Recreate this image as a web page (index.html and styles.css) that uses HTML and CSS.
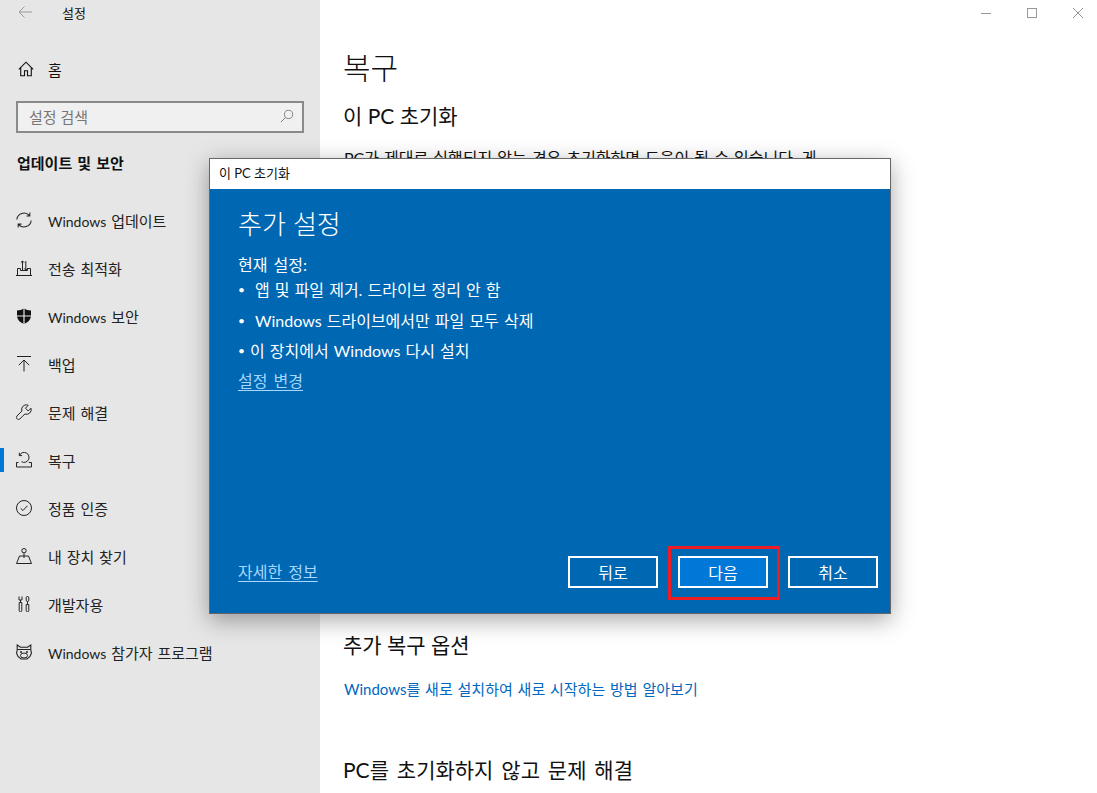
FILE: index.html
```html
<!DOCTYPE html>
<html lang="ko">
<head>
<meta charset="utf-8">
<title>설정</title>
<link rel="stylesheet" href="styles.css">
</head>
<body>
<div class="app">
  <aside class="sidebar">
    <div class="titlebar">
      <svg class="back" viewBox="0 0 16 16" width="16" height="16"><path d="M15 8H2M7.500 2.500 2 8l5.500 5.500" fill="none" stroke="#999" stroke-width="1"/></svg>
      <span class="apptitle">설정</span>
    </div>
    <a class="home">
      <svg class="icon" viewBox="0 0 16 16" width="16" height="16"><path d="M.8 8.300 8 1.200l7.200 7.100M2.700 6.500v8.300h3.800v-5h3v5h3.800V6.500" fill="none" stroke="#111" stroke-width="1.100"/></svg>
      <span>홈</span>
    </a>
    <div class="search">
      <span>설정 검색</span>
      <svg viewBox="0 0 16 16" width="14" height="14"><circle cx="9.800" cy="6.200" r="4.700" fill="none" stroke="#777" stroke-width="1"/><path d="M6.400 9.600 1 15" stroke="#777" stroke-width="1.100"/></svg>
    </div>
    <div class="section">업데이트 및 보안</div>
    <nav class="nav">
      <a class="item">
        <svg class="icon" viewBox="0 0 16 16" width="16" height="16"><path d="M.8 7.500A7.200 7.200 0 0 1 13.300 3.400M15.200 8.500A7.200 7.200 0 0 1 2.700 12.600M13.800 .6v3.300h-3.300M2.200 15.400v-3.300h3.300" fill="none" stroke="#222" stroke-width="1.050"/></svg>
        <span><b class="latin">Windows</b> 업데이트</span>
      </a>
      <a class="item">
        <svg class="icon" viewBox="0 0 16 16" width="16" height="16"><path d="M0 15.500h16M1.500 15.500V8.500h3M11.500 8.500h3v7M6.500 1v9M4.800 2.700 6.500 1l1.700 1.700M9.800 1v9M8.100 8.300 9.800 10l1.700-1.700M4.500 8.500v2h7v-2" fill="none" stroke="#222" stroke-width="1"/></svg>
        <span>전송 최적화</span>
      </a>
      <a class="item">
        <svg class="icon" viewBox="0 0 16 16" width="16" height="16"><path d="M8 .3C10 2 12.500 2.500 15 2.500v5C15 11.500 12 14.500 8 16 4 14.500 1 11.500 1 7.500v-5C3.500 2.500 6 2 8 .3Z" fill="#111"/><path d="M8 0v16M.5 8h15" stroke="#e6e6e6" stroke-width="1.200"/></svg>
        <span><b class="latin">Windows</b> 보안</span>
      </a>
      <a class="item">
        <svg class="icon" viewBox="0 0 16 16" width="16" height="16"><path d="M1 .5h14M8 15.500V4M2.800 9.200 8 4l5.200 5.200" fill="none" stroke="#222" stroke-width="1"/></svg>
        <span>백업</span>
      </a>
      <a class="item">
        <svg class="icon" viewBox="0 0 16 16" width="16" height="16"><path d="M10.300.8a4.700 4.700 0 0 0-4.400 6.200L.9 12.100a1.800 1.800 0 0 0 0 2.500l.4.400a1.800 1.800 0 0 0 2.500 0l5-5A4.700 4.700 0 0 0 15 4.200L12.200 7 9.500 4.200 12.200 1.300a4.700 4.700 0 0 0-1.900-.5Z" fill="none" stroke="#222" stroke-width="1"/></svg>
        <span>문제 해결</span>
      </a>
      <a class="item active">
        <svg class="icon" viewBox="0 0 16 16" width="16" height="16"><path d="M3.500 3.300A5 5 0 1 1 5.500 9.700M3.300.8v2.800h2.800M12.800 10.500h2.700v4.500H.5v-4.500h2" fill="none" stroke="#222" stroke-width="1"/></svg>
        <span>복구</span>
      </a>
      <a class="item">
        <svg class="icon" viewBox="0 0 16 16" width="16" height="16"><circle cx="8" cy="8" r="7.500" fill="none" stroke="#222" stroke-width="1"/><path d="M4.700 8.300 7 10.500l4.400-4.700" fill="none" stroke="#222" stroke-width="1"/></svg>
        <span>정품 인증</span>
      </a>
      <a class="item">
        <svg class="icon" viewBox="0 0 16 16" width="16" height="16"><circle cx="8" cy="2.700" r="2.200" fill="none" stroke="#222" stroke-width="1"/><path d="M8 5v5M.5 15.500h15L12.500 8h-9Z" fill="none" stroke="#222" stroke-width="1"/></svg>
        <span>내 장치 찾기</span>
      </a>
      <a class="item">
        <svg class="icon" viewBox="0 0 16 16" width="16" height="16"><path d="M3 .5v3.500h3V.5M4.500 4v2M3.200 6.500h2.600v8a1.300 1.300 0 0 1-2.600 0ZM10.200 8.500h2.600v6a1.300 1.300 0 0 1-2.600 0ZM11.500 8.500V5.500" fill="none" stroke="#222" stroke-width="1"/><rect x="10.200" y=".5" width="2.600" height="5" rx="1.300" fill="none" stroke="#222"/></svg>
        <span>개발자용</span>
      </a>
      <a class="item">
        <svg class="icon" viewBox="0 0 16 16" width="16" height="16"><path d="M1.200 1 4.500 3.200h7L14.800 1v5.500l.7 2.500-1.500 3.500-3 2.500H5l-3-2.500L.5 9l.7-2.500Z" fill="none" stroke="#222" stroke-width="1.100"/><ellipse cx="8" cy="11.500" rx="3.500" ry="2.500" fill="none" stroke="#222"/><path d="M1.500 5.500h13" stroke="#222" stroke-width="1"/><circle cx="5" cy="8" r="1" fill="#222"/><circle cx="11" cy="8" r="1" fill="#222"/></svg>
        <span><b class="latin">Windows</b> 참가자 프로그램</span>
      </a>
    </nav>
  </aside>
  <main class="main">
    <div class="winbar">
      <svg viewBox="0 0 46 30" width="46" height="30"><path d="M18 13.500h10" stroke="#999"/></svg>
      <svg viewBox="0 0 46 30" width="46" height="30"><rect x="18.500" y="8.500" width="9" height="9" fill="none" stroke="#999"/></svg>
      <svg viewBox="0 0 46 30" width="46" height="30"><path d="m18 8 10 10M28 8 18 18" stroke="#999"/></svg>
    </div>
    <h1 class="page-title">복구</h1>
    <h2 class="heading first">이 PC 초기화</h2>
    <p class="para">PC가 제대로 실행되지 않는 경우 초기화하면 도움이 될 수 있습니다. 게</p>
    <h2 class="heading options">추가 복구 옵션</h2>
    <a class="link">Windows를 새로 설치하여 새로 시작하는 방법 알아보기</a>
    <h2 class="heading trouble">PC를 초기화하지 않고 문제 해결</h2>
  </main>
  <section class="dialog">
    <header class="dialog-title">이 PC 초기화</header>
    <div class="dialog-body">
      <h2 class="dialog-heading">추가 설정</h2>
      <div class="current">현재 설정:</div>
      <ul class="list">
        <li><span class="dot">•</span><span class="pad1">앱 및 파일 제거. 드라이브 정리 안 함</span></li>
        <li><span class="dot">•</span><span class="pad1">Windows 드라이브에서만 파일 모두 삭제</span></li>
        <li><span class="dot">•</span><span class="pad2">이 장치에서 Windows 다시 설치</span></li>
      </ul>
      <a class="dialog-link change">설정 변경</a>
      <footer class="dialog-foot">
        <a class="dialog-link">자세한 정보</a>
        <div class="buttons">
          <button class="btn">뒤로</button>
          <button class="btn primary">다음</button>
          <button class="btn">취소</button>
        </div>
      </footer>
    </div>
  </section>
</div>
</body>
</html>
```

FILE: styles.css
```css
* { box-sizing: border-box; }
html, body { margin: 0; height: 100%; overflow: hidden; }
body {
  font-family: Lato, "Noto Sans CJK KR", sans-serif;
  font-size: 15px;
  color: #111;
  background: #fff;
}
.app { position: relative; display: flex; width: 1097px; height: 793px; overflow: hidden; }

.sidebar { width: 320px; flex: none; background: #e6e6e6; }
.titlebar { display: flex; align-items: center; height: 26px; padding-left: 17px; }
.back { margin-top: -2px; }
.apptitle { margin-left: 29px; font-size: 13px; line-height: 26px; }
.home { display: flex; align-items: center; height: 48px; margin-top: 19px; padding-left: 18px; }
.home span { margin-left: 14px; }
.search {
  display: flex; align-items: center; justify-content: space-between;
  width: 288px; height: 32px; margin: 8px 0 0 16px; padding: 0 8px 2px 11px;
  background: #f0f0f0; border: 2px solid #8a8a8a; color: #777;
}
.section { margin: 18px 0 0 17px; height: 24px; line-height: 24px; font-weight: 700; color: #111; word-spacing: 1.500px; }
.nav { display: flex; flex-direction: column; margin-top: 21px; }
.item { position: relative; display: flex; align-items: center; height: 48px; padding-left: 16px; color: #222; word-spacing: 1px; }
.item span { margin-left: 16px; }
.item .icon { flex: none; }
.latin { font-size: 14px; font-weight: 400; }
.item.active::before { content: ""; position: absolute; left: 0; top: 12px; width: 4px; height: 24px; background: #0078d7; }

.main { position: relative; flex: 1; padding-left: 23px; background: #fff; }
.winbar { display: flex; justify-content: flex-end; height: 30px; margin-right: -4px; }
.page-title { margin: 14px 0 0; height: 46px; line-height: 46px; font-size: 30px; font-weight: 300; }
.heading { margin: 0; font-size: 21px; font-weight: 400; line-height: 30px; color: #111; }
.first { margin-top: 11px; }
.para { margin: 16px 0 0 1px; font-size: 16px; line-height: 22px; width: 500px; word-spacing: 1px; }
.options { margin-top: 461px; }
.link { display: block; margin: 18px 0 0 1px; line-height: 22px; color: #0067c0; word-spacing: 1px; }
.trouble { margin-top: 55px; word-spacing: 2.500px; }

.dialog {
  position: absolute; left: 209px; top: 158px; width: 682px; height: 456px;
  display: flex; flex-direction: column;
  border: 1px solid #666; background: #0067b3;
  box-shadow: 0 6px 22px rgba(0,0,0,.35);
}
.dialog-title { flex: none; height: 30px; line-height: 29px; padding-left: 9px; background: #fff; font-size: 13px; color: #111; }
.dialog-body { flex: 1; display: flex; flex-direction: column; padding: 0 12px 0 28px; color: #fff; font-size: 16px; }
.dialog-heading { margin: 14px 0 0; font-size: 26px; font-weight: 300; line-height: 42px; }
.current { margin-top: 8px; line-height: 24px; word-spacing: 2px; }
.list { list-style: none; margin: -2px 0 0; padding: 0; word-spacing: 1px; }
.list li { display: flex; height: 30.500px; line-height: 30px; }
.dot { width: 5px; font-size: 12px; }
.pad1 { margin-left: 12px; }
.pad2 { margin-left: 7px; }
.dialog-link { color: #a6d8ff; text-decoration: underline; text-underline-offset: 3px; line-height: 24px; word-spacing: 2px; }
.change { margin-top: 2px; align-self: flex-start; }
.dialog-foot { display: flex; align-items: center; justify-content: space-between; margin-top: auto; padding-bottom: 25px; }
.buttons { display: flex; gap: 20px; }
.btn {
  width: 90px; height: 32px; padding: 0;
  border: 2px solid #fff; background: transparent; color: #fff;
  font: inherit; font-size: 16px;
}
.primary { position: relative; background: #0078d7; }
.primary::after {
  content: ""; position: absolute; left: -12px; top: -12px; right: -14px; bottom: -14px;
  border: 3px solid #ed1c24;
}
```
